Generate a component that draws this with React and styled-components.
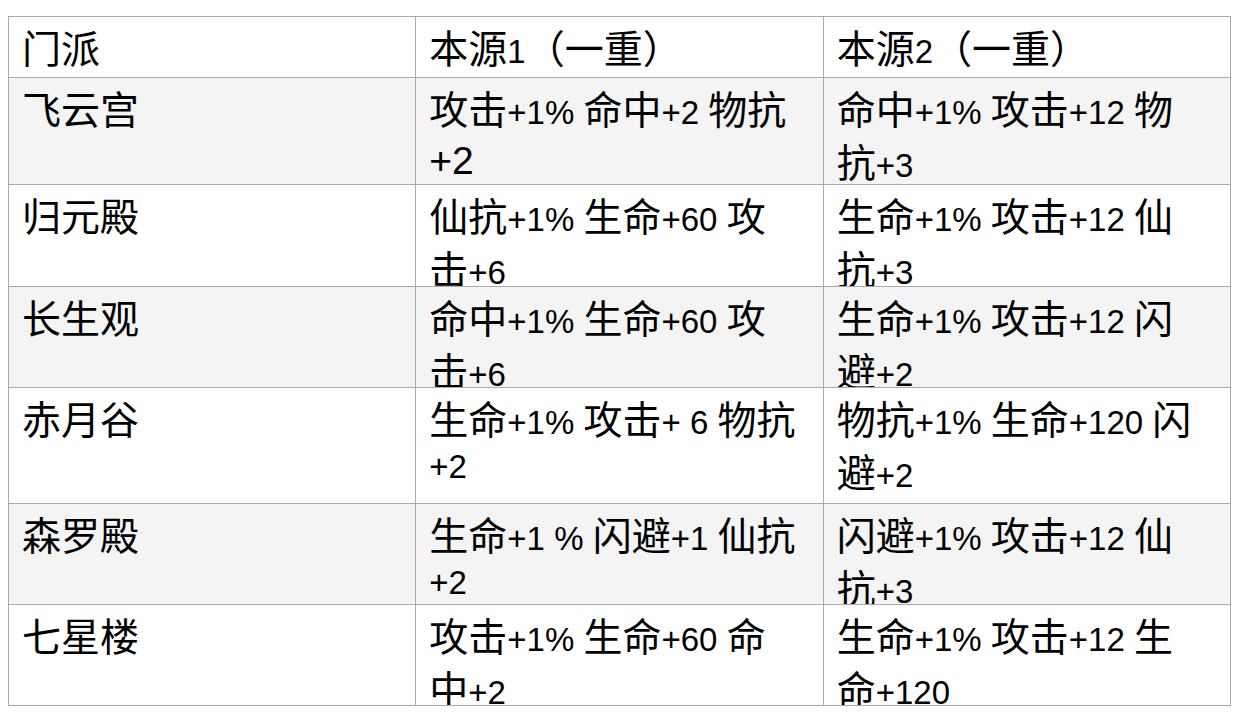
import React from 'react';
import styled, { createGlobalStyle } from 'styled-components';

const GlobalStyle = createGlobalStyle`
  html, body {
    margin: 0;
    padding: 0;
    background: #ffffff;
  }
`;

const Page = styled.div`
  padding: 16px 0 0 8px;
`;

const Grid = styled.div`
  display: grid;
  grid-template-columns: repeat(3, 1fr);
  width: 1223px;
  border-top: 1px solid #aaaaaa;
  border-left: 1px solid #aaaaaa;
  box-sizing: border-box;
`;

const Cell = styled.div`
  box-sizing: border-box;
  height: ${(p) => p.$height}px;
  overflow: hidden;
  padding: 4px 22px 0 13px;
  border-right: 1px solid #aaaaaa;
  border-bottom: 1px solid #aaaaaa;
  background: ${(p) => (p.$striped ? '#f4f4f4' : '#ffffff')};
  color: #000000;
  font-family: "Liberation Sans", "Noto Sans CJK SC", sans-serif;
  font-size: 33px;
  line-height: 1.33;
`;

const Han = styled.span`
  font-family: "Noto Sans CJK SC", sans-serif;
  font-size: 39px;
`;

const Big = styled.span`
  font-size: 39px;
`;

const header = ['门派', '本源1（一重）', '本源2（一重）'];

const rows = [
  { height: 107, cells: ['飞云宫', ['攻击+1% 命中+2 物抗', '+2'], '命中+1% 攻击+12 物抗+3'] },
  { height: 102, cells: ['归元殿', '仙抗+1% 生命+60 攻击+6', '生命+1% 攻击+12 仙抗+3'] },
  { height: 101, cells: ['长生观', '命中+1% 生命+60 攻击+6', '生命+1% 攻击+12 闪避+2'] },
  { height: 116, cells: ['赤月谷', '生命+1% 攻击+ 6 物抗+2', '物抗+1% 生命+120 闪避+2'] },
  { height: 101, cells: ['森罗殿', '生命+1 % 闪避+1 仙抗+2', '闪避+1% 攻击+12 仙抗+3'] },
  { height: 101, cells: ['七星楼', '攻击+1% 生命+60 命中+2', '生命+1% 攻击+12 生命+120'] },
];

const HAN_RUN = /([\u3000-\u9fff\uff00-\uffef]+)/;

const MixedText = ({ text }) =>
  text.split(HAN_RUN).filter(Boolean).map((part, i) =>
    HAN_RUN.test(part) ? <Han key={i}>{part}</Han> : <React.Fragment key={i}>{part}</React.Fragment>
  );

const CellText = ({ value }) => {
  if (Array.isArray(value)) {
    const [text, tail] = value;
    return (
      <>
        <MixedText text={text} />
        <Big>{tail}</Big>
      </>
    );
  }
  return <MixedText text={value} />;
};

const App = () => (
  <Page>
    <GlobalStyle />
    <Grid>
      {header.map((title) => (
        <Cell key={title} $height={61}>
          <CellText value={title} />
        </Cell>
      ))}
      {rows.map((row, r) =>
        row.cells.map((value, c) => (
          <Cell key={`${r}-${c}`} $height={row.height} $striped={r % 2 === 0}>
            <CellText value={value} />
          </Cell>
        ))
      )}
    </Grid>
  </Page>
);

export default App;
